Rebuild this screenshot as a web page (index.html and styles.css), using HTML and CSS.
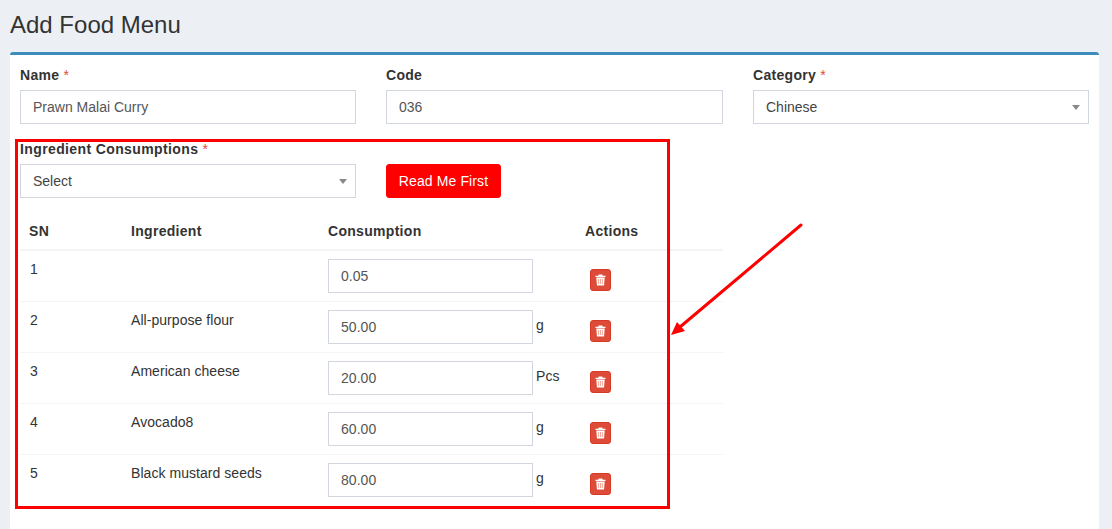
FILE: index.html
```html
<!DOCTYPE html>
<html lang="en">
<head>
<meta charset="utf-8">
<title>Add Food Menu</title>
<link rel="stylesheet" href="styles.css">
</head>
<body>
<section class="page">
  <h1 class="title">Add Food Menu</h1>
  <div class="box">
    <div class="grid">
      <div class="field">
        <label class="label">Name <span class="req">*</span></label>
        <div class="control">Prawn Malai Curry</div>
      </div>
      <div class="field">
        <label class="label">Code</label>
        <div class="control">036</div>
      </div>
      <div class="field">
        <label class="label">Category <span class="req">*</span></label>
        <div class="control select">Chinese<span class="caret"></span></div>
      </div>
    </div>
    <div class="grid second">
      <div class="field">
        <label class="label wide">Ingredient Consumptions <span class="req">*</span></label>
        <div class="control select">Select<span class="caret"></span></div>
      </div>
      <div class="field end">
        <button class="read" type="button">Read Me First</button>
      </div>
    </div>
    <table class="table">
      <thead>
        <tr><th class="c1">SN</th><th class="c2">Ingredient</th><th class="c3">Consumption</th><th class="c4">Actions</th></tr>
      </thead>
      <tbody>
        <tr><td>1</td><td></td><td><div class="cons"><div class="control num">0.05</div><span class="unit"></span></div></td><td><button class="del" type="button"><svg viewBox="0 0 11 12" class="trash"><path d="M3.8 0.5h3.4l.6 1.2h2.7v1.3H.5V1.700h2.700zM1.300 3.600h8.400l-.6 7.300c0 .4-.3.6-.7.6H2.600c-.4 0-.7-.2-.7-.6z"/><path class="bars" d="M3.600 5v5M5.500 5v5M7.400 5v5"/></svg></button></td></tr>
        <tr><td>2</td><td>All-purpose flour</td><td><div class="cons"><div class="control num">50.00</div><span class="unit">g</span></div></td><td><button class="del" type="button"><svg viewBox="0 0 11 12" class="trash"><path d="M3.8 0.5h3.4l.6 1.2h2.7v1.3H.5V1.700h2.700zM1.300 3.600h8.400l-.6 7.300c0 .4-.3.6-.7.6H2.600c-.4 0-.7-.2-.7-.6z"/><path class="bars" d="M3.600 5v5M5.500 5v5M7.400 5v5"/></svg></button></td></tr>
        <tr><td>3</td><td>American cheese</td><td><div class="cons"><div class="control num">20.00</div><span class="unit">Pcs</span></div></td><td><button class="del" type="button"><svg viewBox="0 0 11 12" class="trash"><path d="M3.8 0.5h3.4l.6 1.2h2.7v1.3H.5V1.700h2.700zM1.300 3.600h8.400l-.6 7.300c0 .4-.3.6-.7.6H2.600c-.4 0-.7-.2-.7-.6z"/><path class="bars" d="M3.600 5v5M5.500 5v5M7.400 5v5"/></svg></button></td></tr>
        <tr><td>4</td><td>Avocado8</td><td><div class="cons"><div class="control num">60.00</div><span class="unit">g</span></div></td><td><button class="del" type="button"><svg viewBox="0 0 11 12" class="trash"><path d="M3.8 0.5h3.4l.6 1.2h2.7v1.3H.5V1.700h2.700zM1.300 3.600h8.400l-.6 7.300c0 .4-.3.6-.7.6H2.600c-.4 0-.7-.2-.7-.6z"/><path class="bars" d="M3.600 5v5M5.500 5v5M7.400 5v5"/></svg></button></td></tr>
        <tr><td>5</td><td>Black mustard seeds</td><td><div class="cons"><div class="control num">80.00</div><span class="unit">g</span></div></td><td><button class="del" type="button"><svg viewBox="0 0 11 12" class="trash"><path d="M3.8 0.5h3.4l.6 1.2h2.7v1.3H.5V1.700h2.700zM1.300 3.600h8.400l-.6 7.300c0 .4-.3.6-.7.6H2.600c-.4 0-.7-.2-.7-.6z"/><path class="bars" d="M3.600 5v5M5.500 5v5M7.400 5v5"/></svg></button></td></tr>
      </tbody>
    </table>
  </div>
</section>
<div class="redbox"></div>
<svg class="arrow" width="1112" height="529" viewBox="0 0 1112 529">
  <path d="M801 225L680 327" stroke="#f00" stroke-width="3" stroke-linecap="round" fill="none"/>
  <path d="M671 335L677 322L685 331z" fill="#f00"/>
</svg>
</body>
</html>
```

FILE: styles.css
```css
* { box-sizing: border-box; }
html, body { margin: 0; height: 529px; overflow: hidden; }
body {
  background: #ecf0f5;
  font-family: "Liberation Sans", Arial, sans-serif;
  font-size: 14px;
  color: #333;
  position: relative;
}
.page { padding: 0 13px 0 10px; }
.title {
  margin: 0;
  padding-top: 12px;
  height: 52px;
  font-size: 24px;
  line-height: 26px;
  font-weight: 400;
  color: #333;
}
.box {
  background: #fff;
  border-top: 3px solid #3c8dbc;
  border-radius: 3px 3px 0 0;
  padding: 10px 10px 0;
  height: 480px;
}
.grid {
  display: grid;
  grid-template-columns: 336px 337px 336px;
  column-gap: 30px;
}
.second { margin-top: 15px; }
.field { display: flex; flex-direction: column; }
.end { justify-content: flex-end; align-items: flex-start; }
.label {
  font-weight: 700;
  font-size: 14px;
  line-height: 20px;
  height: 25px;
  letter-spacing: 0.3px;
}
.wide { letter-spacing: 0.38px; }
.req { color: #dd4b39; font-weight: 400; }
.control {
  height: 34px;
  border: 1px solid #d2d6de;
  padding: 0 12px;
  line-height: 32px;
  font-size: 14px;
  color: #555;
  background: #fff;
  position: relative;
}
.select { color: #444; }
.caret {
  position: absolute;
  right: 8px;
  top: 14px;
  border-left: 4px solid transparent;
  border-right: 4px solid transparent;
  border-top: 5px solid #888;
}
.read {
  height: 34px;
  width: 115px;
  border: 1px solid #f00;
  border-radius: 3px;
  background: #f00;
  color: #fff;
  font: 14px "Liberation Sans", Arial, sans-serif;
  letter-spacing: 0.12px;
  padding: 0;
}
.table {
  width: 703px;
  margin-top: 16px;
  border-collapse: collapse;
  table-layout: fixed;
}
.c1 { width: 111px; }
.c2 { width: 197px; }
.c3 { width: 257px; }
.c4 { width: 138px; }
th {
  text-align: left;
  font-weight: 700;
  height: 36px;
  padding: 0 0 2px 9px;
  letter-spacing: 0.3px;
  border-bottom: 2px solid #f4f4f4;
}
th.c2, th.c3, th.c4 { padding-left: 0; }
td {
  height: 51px;
  padding: 0;
  vertical-align: top;
  border-top: 1px solid #f4f4f4;
  line-height: 20px;
  color: #333;
  letter-spacing: 0.05px;
}
thead + tbody tr:first-child td { border-top: 0; }
td:first-child { padding: 8px 0 0 10px; }
td:nth-child(2) { padding-top: 8px; }
td:nth-child(3) { padding-top: 8px; }
td:nth-child(4) { padding: 18px 0 0 5px; }
.cons { display: flex; align-items: flex-start; }
.num { width: 205px; flex: none; }
.unit { margin-left: 3px; padding-top: 5px; }
.del {
  display: flex;
  align-items: center;
  justify-content: center;
  width: 21px;
  height: 22px;
  padding: 0;
  border: 1px solid #d73925;
  border-radius: 3px;
  background: #dd4b39;
}
.trash { width: 11px; height: 12px; fill: #fff; }
.bars { stroke: #f0a090; stroke-width: 0.9; fill: none; }
.redbox {
  position: absolute;
  left: 15px;
  top: 139px;
  width: 655px;
  height: 370px;
  border: 3px solid #f00;
  pointer-events: none;
}
.arrow { position: absolute; left: 0; top: 0; pointer-events: none; }
```
